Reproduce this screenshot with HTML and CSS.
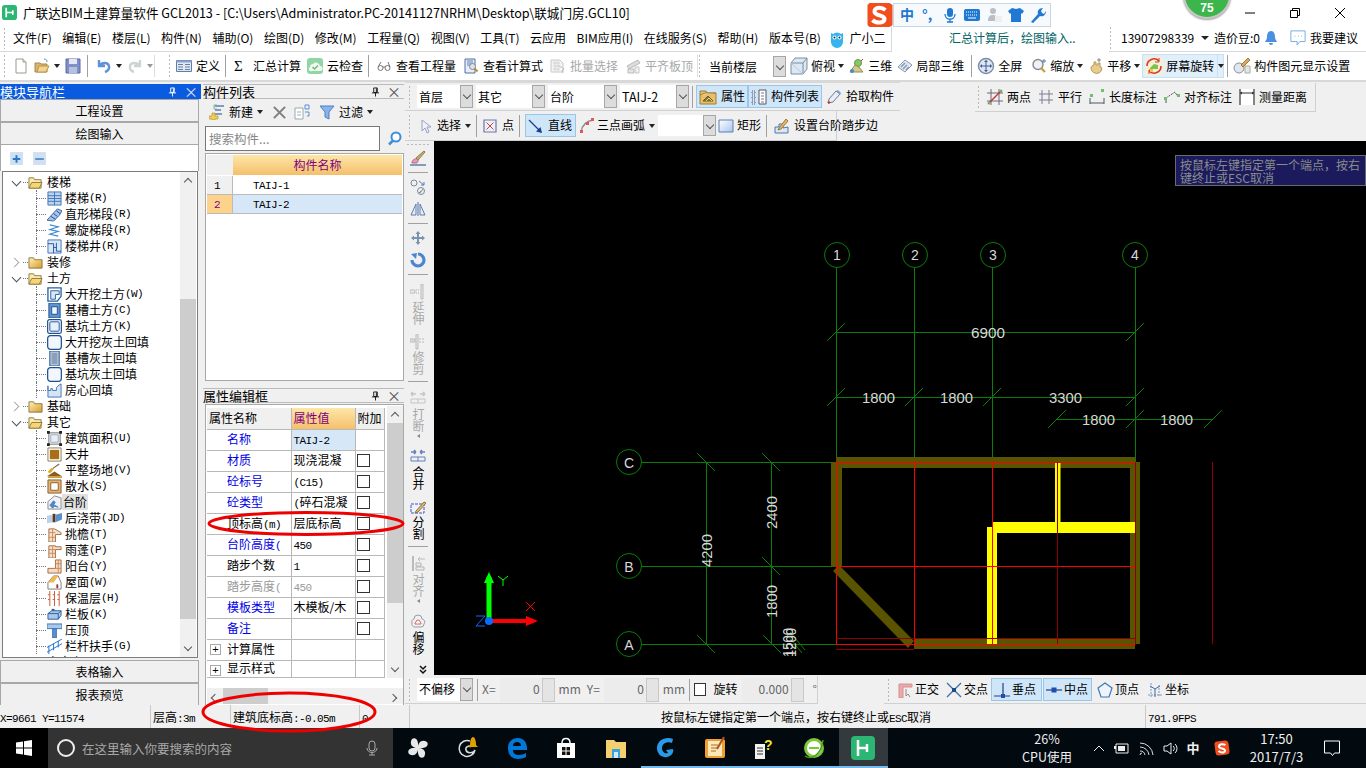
FILE: index.html
```html
<!DOCTYPE html>
<html lang="zh-CN">
<head>
<meta charset="utf-8">
<title>广联达BIM土建算量软件 GCL2013</title>
<link rel="stylesheet" href="styles.css">
</head>
<body>
<svg class="defs" aria-hidden="true">
<defs>
<symbol id="doc" viewBox="0 0 16 16"><path d="M3 1h7l3 3v11H3z" fill="#fff" stroke="#9a9a8a"/><path d="M10 1v3h3" fill="#e8e8d8" stroke="#9a9a8a"/></symbol>
<symbol id="open" viewBox="0 0 16 16"><path d="M1 5h5l1 1h6v8H1z" fill="#d9b36a" stroke="#a8874a"/><path d="M3 14l2-6h10l-3 6z" fill="#f3d58f" stroke="#b8964e"/><path d="M10 1c2 0 3 1 3 3" fill="none" stroke="#6a8ab0"/></symbol>
<symbol id="save" viewBox="0 0 16 16"><path d="M1 1h14v14H1z" fill="#7f8fc8" stroke="#5b6aa8"/><path d="M4 1h8v5H4z" fill="#e4e8f4"/><path d="M4 9h8v6H4z" fill="#b8c0e0"/></symbol>
<symbol id="undo" viewBox="0 0 16 16"><path d="M3 2v6h6M3 8c3-4 9-4 10 0 .6 3-1 5-4 6" fill="none" stroke="#5d92d6" stroke-width="2.4"/></symbol>
<symbol id="redo" viewBox="0 0 16 16"><path d="M13 2v6H7M13 8c-3-4-9-4-10 0-.6 3 1 5 4 6" fill="none" stroke="#ccd4d4" stroke-width="2.4"/></symbol>
<symbol id="def" viewBox="0 0 16 16"><path d="M.5 2.5h15v11H.5z" fill="#dfe8f4" stroke="#5f7fa8"/><path d="M.5 2.5h15v2H.5z" fill="#8aa6cc"/><path d="M2 6.500h5M2 9h5M2 11.500h5M9 6.500h5M9 9h5M9 11.500h5" stroke="#6b7f96"/></symbol>
<symbol id="cloud" viewBox="0 0 16 16"><rect x="0" y="0" width="16" height="16" rx="3" fill="#8fd6a4"/><path d="M3 9a3 3 0 0 1 3-3 4 4 0 0 1 7 2 2.500 2.500 0 0 1 0 5H5a2 2 0 0 1-2-4z" fill="#f2f7ef"/><path d="M5.500 9l2 2 3.500-3.500" fill="none" stroke="#6ab580" stroke-width="1.300"/></symbol>
<symbol id="glass" viewBox="0 0 16 16"><path d="M2 10a2.500 2.500 0 1 0 5 0 2.500 2.500 0 1 0-5 0zM9 10a2.500 2.500 0 1 0 5 0 2.500 2.500 0 1 0-5 0zM7 9h2M2 9l3-5M14 9l-2-5" fill="none" stroke="#777"/></symbol>
<symbol id="calc" viewBox="0 0 16 16"><path d="M2 1h10v14H2z" fill="#e8eef8" stroke="#4e6fa8"/><path d="M4 3h6M4 5h6M4 7h3" stroke="#5d7fb8"/><circle cx="9.500" cy="8.500" r="3" fill="#d8e4f0" stroke="#888"/><path d="M11.500 10.500l3 3" stroke="#c08a30" stroke-width="2"/></symbol>
<symbol id="batch" viewBox="0 0 16 16"><path d="M1 2h9l3 3v9H1z" fill="#f3f3f3" stroke="#c8c8c8"/><path d="M3 5h7M3 8h7M3 11h7M5 3v10M8 3v10" stroke="#d4d4d4"/><path d="M9 8l5 3-2 1 1 3" fill="#fff" stroke="#bcbcbc"/></symbol>
<symbol id="flat" viewBox="0 0 16 16"><path d="M2 8l11-6 2 3-11 6z" fill="#dcdcdc" stroke="#bbb"/><path d="M3 11h6v4H3z" fill="#e4e4e4" stroke="#bbb"/><path d="M10 9h4v6h-4z" fill="#eee" stroke="#c8c8c8"/></symbol>
<symbol id="box3d" viewBox="0 0 18 18"><path d="M1 6l4-5h12v11l-4 5H1z" fill="#dbe7f2" stroke="#7c8ea0"/><path d="M1 6h12v11M13 6l4-5" fill="none" stroke="#7c8ea0"/><path d="M1 6l12 11" stroke="#b9cadb"/></symbol>
<symbol id="tri" viewBox="0 0 16 16"><circle cx="9" cy="5" r="3.500" fill="#88c86a" stroke="#5b9b48"/><path d="M1 14l5-7 4 2 4 5z" fill="#d6c88c" stroke="#8f8f50"/><circle cx="3" cy="13" r="2" fill="#4a8aca"/><path d="M12 3l2-2" stroke="#c33"/></symbol>
<symbol id="local" viewBox="0 0 16 16"><path d="M1 9l7-7 7 5-7 7z" fill="#dfe8f4" stroke="#8a9ab0"/><path d="M4 9l4-4M6 11l4-4M9 12l3-3" stroke="#8a9ab0" stroke-width="1.500"/></symbol>
<symbol id="full" viewBox="0 0 18 18"><circle cx="9" cy="9" r="7.500" fill="#dfe6f2" stroke="#7a8ca6" stroke-width="1.400"/><path d="M9 3.500v11M3.500 9h11" stroke="#3e5f9a"/><path d="M9 3l-2 2h4zM9 15l-2-2h4zM3 9l2-2v4zM15 9l-2-2v4z" fill="#3e5f9a"/></symbol>
<symbol id="zoom" viewBox="0 0 16 16"><circle cx="7" cy="6.500" r="5" fill="#eef2f8" stroke="#8a8a8a" stroke-width="1.400"/><path d="M10 10l4 4" stroke="#c9a23e" stroke-width="2.400"/><path d="M13 1v4M11 3h4" stroke="#4f7fb8"/></symbol>
<symbol id="hand" viewBox="0 0 16 16"><path d="M3 10c0-2 2-3 3-3V4h2v3h2V5h2v4h1c1 1 1 3 0 4-1 2-4 3-6 2-2 0-4-3-4-5z" fill="#e8cc8e" stroke="#b69752"/><path d="M11 0v4M9 2h4" stroke="#888"/></symbol>
<symbol id="rotate" viewBox="0 0 18 18"><rect x="0" y="0" width="18" height="18" fill="#f4f0d8"/><path d="M2 9a7 7 0 0 1 12-5M16 9a7 7 0 0 1-12 5" fill="none" stroke="#e0352a" stroke-width="1.600"/><path d="M14 1v4h-4M4 17v-4h4" fill="none" stroke="#e0352a"/><path d="M5 11l4-4 4 1v4H5z" fill="#7cc24c"/><path d="M5 12h3v3H5z" fill="#f1c740"/></symbol>
<symbol id="disp" viewBox="0 0 18 18"><circle cx="6" cy="11" r="5" fill="#dfe6ef" stroke="#8f8f8f"/><path d="M8 8l7-7 2 2-7 7z" fill="#d8a95e" stroke="#a07a3a"/><path d="M12 9h5v7h-5z" fill="#e8e8d8" stroke="#aaa"/></symbol>
<symbol id="props" viewBox="0 0 18 18"><path d="M1 3h6l1 2h9v11H1z" fill="#e8be6a" stroke="#9c7e36"/><path d="M1 7l5-2h11" fill="#f6e4b0" stroke="#9c7e36"/><path d="M4 13l5-5 5 5z" fill="#8a7a30" stroke="#6a5a20"/><path d="M7 13l3-3 3 3" stroke="#e8d080" fill="none"/></symbol>
<symbol id="list" viewBox="0 0 16 16"><path d="M1 2h3v3H1zM1 7h3v3H1zM1 12h3v3H1z" fill="none" stroke="#556" stroke-dasharray="1 1"/><path d="M8 1h7v14H8z" fill="#fff" stroke="#556"/><path d="M10 4h3M10 7h3M10 10h3M10 13h3" stroke="#778"/></symbol>
<symbol id="pick" viewBox="0 0 16 16"><path d="M2 14l1-4 7-8 4 3-7 8z" fill="#e8eef6" stroke="#6c7b94"/><path d="M10 2l2-1 3 3-1 2z" fill="#7aa2d0"/><path d="M2 14l2-1" stroke="#c33" stroke-width="2"/></symbol>
<symbol id="twop" viewBox="0 0 16 16"><path d="M4 0v16M12 0v16M0 4h16M0 12h16" stroke="#6a6a7a"/><path d="M2 14L14 2" stroke="#c33" stroke-width="1.400"/><circle cx="2" cy="14" r="1.500" fill="#6bb36b"/><circle cx="14" cy="2" r="1.500" fill="#6bb36b"/></symbol>
<symbol id="para" viewBox="0 0 16 16"><path d="M4 1v14M11 1v14M1 5h14M1 11h14" stroke="#7c7c96"/></symbol>
<symbol id="lend" viewBox="0 0 16 16"><path d="M1 9v6M15 9v6M1 14h14" stroke="#556"/><rect x="1" y="5" width="3" height="3" fill="#6bc26b"/><rect x="12" y="0" width="3" height="3" fill="#6bc26b"/></symbol>
<symbol id="align" viewBox="0 0 16 16"><path d="M2 9l9-6 3 5" fill="none" stroke="#556" stroke-dasharray="2 1"/><path d="M2 14v-4" stroke="#556"/><rect x="0" y="8" width="3" height="3" fill="#6bc26b"/><rect x="13" y="5" width="3" height="3" fill="#6bc26b"/></symbol>
<symbol id="measure" viewBox="0 0 16 16"><rect x="0" y="0" width="16" height="16" fill="#fff"/><path d="M1 0v16M15 0v16M1 4h14" stroke="#333" stroke-width="1.200"/><path d="M1 4l2-1.500v3zM15 4l-2-1.500v3z" fill="#333"/></symbol>
<symbol id="select" viewBox="0 0 16 16"><path d="M5 2v11l3-3 2 5 2-1-2-5h4z" fill="#eef0fa" stroke="#99a3c0"/></symbol>
<symbol id="point" viewBox="0 0 16 16"><path d="M2 2h12v12H2z" fill="#eef0f8" stroke="#6a78a8" stroke-width="1.200"/><path d="M4.500 4.500l7 7M11.500 4.500l-7 7" stroke="#c44"/></symbol>
<symbol id="line" viewBox="0 0 16 16"><path d="M1 2l12 12" stroke="#14408f" stroke-width="1.300"/><path d="M14 15l-6-1.500 4.500-4.500z" fill="#14408f"/></symbol>
<symbol id="arc" viewBox="0 0 16 16"><path d="M2 14C3 7 8 3 14 2" fill="none" stroke="#8a8a8a" stroke-width="1.300"/><rect x="1" y="12" width="3" height="3" fill="#e0565a"/><rect x="7" y="4" width="3" height="3" fill="#e0565a"/><rect x="12" y="0" width="3" height="3" fill="#e0565a"/></symbol>
<symbol id="rect" viewBox="0 0 16 16"><defs><linearGradient id="rg" x1="0" y1="0" x2="1" y2="1"><stop offset="0" stop-color="#fff"/><stop offset="1" stop-color="#a8c4ee"/></linearGradient></defs><path d="M1 2h14v12H1z" fill="url(#rg)" stroke="#5c7fb8"/></symbol>
<symbol id="setstep" viewBox="0 0 16 16"><path d="M1 15V9h4V6h4v4l5-1v6z" fill="#dbe6f4" stroke="#4f76a8"/><path d="M5 10l7-9 2 2-7 8-3 1z" fill="#e6b666" stroke="#9a7a34"/></symbol>
<symbol id="brush" viewBox="0 0 16 16"><path d="M6 8l8-7 1 1-7 8z" fill="#c8b070" stroke="#8e7a40"/><path d="M2 13c0-3 3-5 5-4 2 1 1 3 0 4z" fill="#e89ab8" stroke="#b06a88"/><path d="M0 15h16" stroke="#4a6fa0" stroke-width="1.300"/></symbol>
<symbol id="copy2" viewBox="0 0 16 16"><circle cx="4" cy="4" r="3" fill="none" stroke="#7a8a9a"/><circle cx="11" cy="12" r="3.500" fill="none" stroke="#7a8a9a"/><path d="M11 12l-2 2M13 10l-3 4" stroke="#7a8a9a"/><path d="M9 2l5 4M14 3v3h-3" fill="none" stroke="#4f7fb8"/></symbol>
<symbol id="mirror" viewBox="0 0 16 16"><path d="M8 1v14" stroke="#4f6fa8"/><path d="M6 3v11H1zM10 3v11h5z" fill="#e4ecf6" stroke="#5f7fb0"/></symbol>
<symbol id="move" viewBox="0 0 16 16"><path d="M8 1l2.500 3H9v3h3V5.500L15 8l-3 2.500V9H9v3h1.500L8 15l-2.500-3H7V9H4v1.500L1 8l3-2.500V7h3V4H5.500z" fill="#7b94ae"/></symbol>
<symbol id="rot" viewBox="0 0 16 16"><path d="M8 2a6 6 0 1 1-6 6" fill="none" stroke="#4a86d0" stroke-width="3.200"/><path d="M1 2l6-1-1 6z" fill="#4a86d0"/></symbol>
<symbol id="ext" viewBox="0 0 16 16"><path d="M11 0h2v15h-2z" fill="#e8e8e8" stroke="#bbb"/><path d="M0 6h5v3H0z" fill="#eee" stroke="#bbb"/><path d="M6 6h3M6 9h3" stroke="#aaa" stroke-dasharray="1 1"/></symbol>
<symbol id="trim" viewBox="0 0 16 16"><path d="M6 0h2v15H6z" fill="#e8e8e8" stroke="#bbb"/><path d="M0 5h5v3H0z" fill="#ddd" stroke="#bbb"/><path d="M9 5h6M9 8h6" stroke="#bbb" stroke-dasharray="2 1"/></symbol>
<symbol id="brk" viewBox="0 0 16 16"><path d="M1 3h5M1 3l2-2M1 3l2 2M15 3h-5M15 3l-2-2M15 3l-2 2" stroke="#c4c4c4" stroke-width="1.500" fill="none"/><path d="M1 8h14v4H1z" fill="none" stroke="#c4c4c4"/><path d="M8 8v4" stroke="#c4c4c4"/></symbol>
<symbol id="merge" viewBox="0 0 16 16"><path d="M1 3h5M6 3L4 1M6 3L4 5M15 3h-5M10 3l2-2M10 3l2 2" stroke="#6080c0" stroke-width="1.500" fill="none"/><path d="M1 8h14v4H1z" fill="none" stroke="#6080c0"/><path d="M8 8v4" stroke="#6080c0"/></symbol>
<symbol id="split" viewBox="0 0 16 16"><path d="M1 5h13v9H1z" fill="#eef2fb" stroke="#3a55c8" stroke-dasharray="3 1"/><path d="M6 12l8-9 2 1-8 9-3 1z" fill="#e6be72" stroke="#8c7236"/></symbol>
<symbol id="aligny" viewBox="0 0 16 16"><path d="M2 0h2v15H2z" fill="#bbb"/><path d="M6 11h8v3H6zM6 7h5v3H6z" fill="#eee" stroke="#b4b4b4"/><path d="M8 3h7M8 3l2-2M8 3l2 2" stroke="#bbb" fill="none"/></symbol>
<symbol id="offset" viewBox="0 0 16 16"><path d="M2 9a3 3 0 0 1 2-4 4 4 0 0 1 8 0 3 3 0 0 1 2 5 3 3 0 0 1-3 3H5a3 3 0 0 1-3-4z" fill="none" stroke="#8f9fb0"/><path d="M5 10a2 2 0 0 1 1-2 2 2 0 0 1 4 0 2 2 0 0 1 1 2z" fill="#fff" stroke="#e06060"/></symbol>
<symbol id="orth" viewBox="0 0 16 16"><path d="M2 2h13v3H6v11H2z" fill="#e8aaaa" stroke="#d89090"/><path d="M9 7v7l2-2 2 3" fill="none" stroke="#8c8c8c"/></symbol>
<symbol id="cross" viewBox="0 0 16 16"><path d="M1 1l14 14M15 1L1 15" stroke="#3b6fa8" stroke-width="1.300"/><rect x="6" y="6" width="4" height="4" fill="#1c4a8a"/></symbol>
<symbol id="perp" viewBox="0 0 16 16"><path d="M9 1v13M0 14h16" stroke="#223f86" stroke-width="1.200"/><rect x="7" y="12" width="4" height="4" fill="#1f4db0"/></symbol>
<symbol id="mid" viewBox="0 0 16 16"><path d="M0 8h16" stroke="#223f86" stroke-width="1.200"/><rect x="5.500" y="5.500" width="5" height="5" fill="#1f4db0"/></symbol>
<symbol id="vert" viewBox="0 0 16 16"><path d="M8 1l7 5-3 9H4L1 6z" fill="#eef4fb" stroke="#3d78b8" stroke-width="1.200"/></symbol>
<symbol id="coord" viewBox="0 0 16 16"><path d="M4 1v14M12 3v11M1 13h14" stroke="#7a98c0" stroke-dasharray="2 1"/><path d="M8 15V7M8 7l5-3M8 7L3 4" stroke="#3d6fb0" fill="none"/></symbol>
<symbol id="newp" viewBox="0 0 16 16"><path d="M6 2h9M6 6h6M6 10h7" stroke="#5b7fb0" stroke-width="1.300"/><path d="M8 1H5v4h3" fill="none" stroke="#8aa"/><path d="M3 9h3v3h3v3H6v1H3v-1H0v-3h3z" fill="#f0cd58" stroke="#b89a30" stroke-width=".700"/></symbol>
<symbol id="del" viewBox="0 0 16 16"><path d="M2 2l12 12M14 2L2 14" stroke="#808080" stroke-width="2.200"/></symbol>
<symbol id="copyp" viewBox="0 0 16 16"><path d="M1 4h8v11H1z" fill="#fff" stroke="#9aa"/><path d="M3 8h4M3 11h4" stroke="#aab"/><path d="M11 1h4v4h-4zM11 8h4M15 8v4h-2" fill="none" stroke="#5b8fd0"/></symbol>
<symbol id="filter" viewBox="0 0 16 16"><path d="M1 2h14l-5 6v7l-4-2V8z" fill="#8cb4ea" stroke="#4d80c8"/></symbol>
<symbol id="folderO" viewBox="0 0 16 16"><path d="M1 3h5l1 2h7v9H1z" fill="#fbe9b0" stroke="#8f7b3e"/><path d="M1 14l3-6h11l-3 6z" fill="#f5d574" stroke="#8f7b3e"/></symbol>
<symbol id="folderC" viewBox="0 0 16 16"><defs><linearGradient id="fc" x1="0" y1="0" x2="1" y2="1"><stop offset="0" stop-color="#fff2b8"/><stop offset="1" stop-color="#d89a28"/></linearGradient></defs><path d="M1 3h5l1 2h8v9H1z" fill="url(#fc)" stroke="#8a7a48"/></symbol>
<symbol id="tStair" viewBox="0 0 16 16"><path d="M1 1h14v14H1z" fill="#bcd4f0" stroke="#3f73b8"/><path d="M1 5h14M1 8h14M1 11h14M8 1v14" stroke="#3f73b8"/></symbol>
<symbol id="tFlight" viewBox="0 0 16 16"><path d="M0 14l11-12 5 2-3 5-6 6z" fill="#a8c4ea" stroke="#3565a8"/><path d="M4 10l5 3M7 7l4 3M10 4l4 3" stroke="#1d4d90"/></symbol>
<symbol id="tSpiral" viewBox="0 0 16 16"><path d="M3 2l9 2-9 3 9 2-9 3 9 2" fill="none" stroke="#3f86d0" stroke-width="1.200"/></symbol>
<symbol id="tWell" viewBox="0 0 16 16"><path d="M1 1h14v14H1z" fill="#d8e6f6" stroke="#3f73b8"/><path d="M1 5h6v10M10 4v9h5M7 9h3" stroke="#1d55a0" fill="none"/></symbol>
<symbol id="tDig" viewBox="0 0 16 16"><path d="M1 1h14v9l-4 5H1z" fill="#fff" stroke="#285f9f" stroke-width="1.400"/><path d="M4 13V4h9v4h-4v5z" fill="#d8e8f8" stroke="#285f9f"/></symbol>
<symbol id="tSlot" viewBox="0 0 16 16"><path d="M2 0h12v16H2z" fill="#5e94cc" stroke="#1f4f90"/><path d="M5 4h6v8H5z" fill="#eef6ff" stroke="#1f4f90"/></symbol>
<symbol id="tPit" viewBox="0 0 16 16"><rect x=".700" y=".700" width="14.600" height="14.600" rx="2" fill="#fff" stroke="#1f4f90" stroke-width="1.300"/><rect x="3" y="3" width="10" height="10" rx="1" fill="#e6f0fc" stroke="#1f4f90"/></symbol>
<symbol id="tFill" viewBox="0 0 16 16"><rect x=".700" y=".700" width="14.600" height="14.600" rx="3" fill="#f2f6fd" stroke="#1f4f90" stroke-width="1.300"/></symbol>
<symbol id="tSlotF" viewBox="0 0 16 16"><path d="M3 0h10v16H3z" fill="#b8c8dc" stroke="#1f4f90"/><path d="M5 2h6v12H5z" fill="#8ca0b8"/></symbol>
<symbol id="tRoom" viewBox="0 0 16 16"><path d="M1 3v12h14V1l-2 1-3 3v3H6V6H4v2H1z" fill="#d6e4f4" stroke="#3f73b8"/></symbol>
<symbol id="tArea" viewBox="0 0 16 16"><path d="M2 2h12v12H2z" fill="#fff" stroke="#667"/><path d="M4 4h8v8H4z" fill="#e8eff8" stroke="#9aa"/><path d="M0 0h3v3H0zM13 0h3v3h-3zM0 13h3v3H0zM13 13h3v3h-3z" fill="#222"/></symbol>
<symbol id="tSky" viewBox="0 0 16 16"><path d="M1 1h14v14H1z" fill="#fff" stroke="#8a7a48"/><rect x="3" y="3" width="10" height="10" fill="#a86e18"/></symbol>
<symbol id="tSite" viewBox="0 0 16 16"><path d="M0 14l8-5 8 5z" fill="#8a5c20"/><path d="M1 15h15" stroke="#c8a040" stroke-width="2"/><path d="M1 9l4-4 2 2-3 3c-1 1-2 1-3-1z" fill="#e0a820"/><path d="M6 6l7-5" stroke="#7a6a40" stroke-width="1.300"/></symbol>
<symbol id="tDrain" viewBox="0 0 16 16"><path d="M1 1h14v14H1z" fill="#e2b47a" stroke="#8a5e2a"/><path d="M4 4h8v8H4z" fill="#fff" stroke="#8a5e2a"/></symbol>
<symbol id="tStep" viewBox="0 0 16 16"><path d="M1 15V7l7-6 7 2v12z" fill="#eef2f8" stroke="#888"/><path d="M3 11l4-5 2 2-2 2 5 3-4-1-2 2z" fill="#4f8ac8" stroke="#2c5f9a" stroke-width=".600"/></symbol>
<symbol id="tPour" viewBox="0 0 16 16"><path d="M0 5l6-1v8l-6 1z" fill="#bcd0e8"/><path d="M6 3h3v9H6z" fill="#5a3a18"/><path d="M9 4l7-2v7l-7 3z" fill="#5c8fcc"/></symbol>
<symbol id="tEave" viewBox="0 0 16 16"><path d="M2 16V2h6l7 4v2H9v8z" fill="#f4e2d0" stroke="#a86a3a"/><path d="M2 6h7M2 11h7M6 2v14" stroke="#c88a5a"/></symbol>
<symbol id="tCan" viewBox="0 0 16 16"><path d="M2 16V3h7v1h6v3H9v9z" fill="#f4e2d0" stroke="#a86a3a"/><path d="M2 7h7M2 11h7M6 3v13" stroke="#c88a5a"/></symbol>
<symbol id="tBalc" viewBox="0 0 16 16"><path d="M9 1h6v14H1v-5h8z" fill="#f4dcc8" stroke="#a86a3a"/><path d="M9 5h6M9 10h6M12 1v14" stroke="#c88a5a"/></symbol>
<symbol id="tRoof" viewBox="0 0 16 16"><path d="M1 8l6-7h5l3 7v7H1z" fill="#fff" stroke="#777"/><path d="M1 8l6-7h5l-5 7z" fill="#f0b850"/><rect x="10" y="10" width="2" height="4" fill="#a03030"/></symbol>
<symbol id="tInsul" viewBox="0 0 16 16"><path d="M3 0v16M8 0v16M13 0v16" stroke="#c85a30"/><path d="M1 4h14M1 9h14" stroke="#c85a30" stroke-dasharray="2 3"/></symbol>
<symbol id="tPanel" viewBox="0 0 16 16"><path d="M1 7l4-3h10v5l-3 4H1z" fill="#a8c8ec" stroke="#2c5f9a"/><path d="M1 7h11v6M12 7l3-3" fill="none" stroke="#2c5f9a"/><path d="M5 2h3v2H5z" fill="#2c5f9a"/></symbol>
<symbol id="tCope" viewBox="0 0 16 16"><path d="M0 1h16v5H0z" fill="#a8c8ec" stroke="#3f73b8"/><path d="M6 6h4v10H6z" fill="#5c8fcc" stroke="#3f73b8"/></symbol>
<symbol id="tRail" viewBox="0 0 16 16"><path d="M0 14l16-9M0 9l16-9M2 7v9M7 5v7M12 2v7" stroke="#1f6fd0" fill="none"/></symbol>
<symbol id="pin" viewBox="0 0 10 10"><path d="M3 .5h4v5H3zM1 6h8M5 6v4M6 1v4.500" fill="none" stroke="currentColor"/></symbol>
<symbol id="pgMic" viewBox="0 0 16 16"><rect x="5" y="1" width="6" height="9" rx="3" fill="#1f78d1"/><path d="M3 7c0 7 10 7 10 0M8 12v3M5 15h6" fill="none" stroke="#1f78d1" stroke-width="1.300"/></symbol>
</defs>
</svg>

<div class="app">
  <header class="titlebar">
    <svg class="logo" viewBox="0 0 16 16"><rect width="16" height="16" rx="3" fill="#2bb673"/><path d="M4.500 3v10M4.500 8h7M11.500 5.500v5" stroke="#fff" stroke-width="1.800"/></svg>
    <span class="title-text">广联达BIM土建算量软件 GCL2013 - [C:\Users\Administrator.PC-20141127NRHM\Desktop\联城门房.GCL10]</span>
    <div class="winctl">
      <svg class="wc" viewBox="0 0 12 12"><path d="M1 6h10" stroke="#000"/></svg>
      <svg class="wc" viewBox="0 0 12 12"><path d="M3.500 3.500v-2h7v7h-2M1.500 3.500h7v7h-7z" fill="none" stroke="#000"/></svg>
      <svg class="wc" viewBox="0 0 12 12"><path d="M1 1l10 10M11 1L1 11" stroke="#000"/></svg>
    </div>
  </header>

  <nav class="menubar">
    <div class="menu-left">
      <span class="grip"></span>
      <span class="mi first">文件(F)</span><span class="mi">编辑(E)</span><span class="mi">楼层(L)</span><span class="mi">构件(N)</span><span class="mi">辅助(O)</span><span class="mi">绘图(D)</span><span class="mi">修改(M)</span><span class="mi">工程量(Q)</span><span class="mi">视图(V)</span><span class="mi">工具(T)</span><span class="mi">云应用</span><span class="mi">BIM应用(I)</span><span class="mi">在线服务(S)</span><span class="mi">帮助(H)</span><span class="mi">版本号(B)</span>
      <svg class="robot" viewBox="0 0 16 16"><path d="M2 3l2 1a6 6 0 0 1 8 0l2-1v9a6 6 0 0 1-12 0z" fill="#35b4ee"/><circle cx="5.500" cy="7.500" r="2" fill="#fff"/><circle cx="10.500" cy="7.500" r="2" fill="#fff"/><circle cx="5.500" cy="7.500" r="1" fill="#134"/><circle cx="10.500" cy="7.500" r="1" fill="#134"/></svg>
      <span class="mi-last">广小二</span>
    </div>
    <span class="notice">汇总计算后，绘图输入..</span>
    <div class="menu-right">
      <span class="grip"></span>
      <span class="account">13907298339</span><span class="caret"></span>
      <span class="beans">造价豆:0</span>
      <svg class="i16 bell" viewBox="0 0 16 16"><path d="M8 1c3 0 4 3 4 6 0 3 2 4 2 5H2c0-1 2-2 2-5 0-3 1-6 4-6zM6 13h4a2 2 0 0 1-4 0z" fill="#4a8fe0"/></svg>
      <svg class="i16 chat" viewBox="0 0 18 18"><path d="M1 1h16v12h-6l-3 4v-4H1z" fill="#fff" stroke="#6aa6e0"/><path d="M5 7h1M9 7h1M12.500 7h1" stroke="#6aa6e0"/></svg>
      <span>我要建议</span>
    </div>
  </nav>

  <div class="toolbar">
    <span class="grip tall"></span>
    <svg class="i16 t-new"><use href="#doc"/></svg>
    <svg class="i16 t-open"><use href="#open"/></svg><span class="caret c-s ca"></span>
    <svg class="i16 t-save"><use href="#save"/></svg>
    <span class="sep t-sep1"></span>
    <svg class="i16"><use href="#undo"/></svg><span class="caret c-s ca"></span>
    <svg class="i16 t-redo"><use href="#redo"/></svg><span class="caret c-s ca dim"></span>
    <span class="sep t-sep2"></span>
    <span class="grip tall t-grip2"></span>
    <span class="tool t-def"><svg class="i16"><use href="#def"/></svg>定义</span>
    <span class="sep"></span>
    <span class="tool t-sum"><span class="sigma">Σ</span>汇总计算</span>
    <span class="tool t-cloud"><svg class="i16"><use href="#cloud"/></svg>云检查</span>
    <span class="sep"></span>
    <span class="tool"><svg class="i16"><use href="#glass"/></svg>查看工程量</span>
    <span class="tool"><svg class="i16"><use href="#calc"/></svg>查看计算式</span>
    <span class="tool off"><svg class="i16"><use href="#batch"/></svg>批量选择</span>
    <span class="tool off"><svg class="i16"><use href="#flat"/></svg>平齐板顶</span>
    <span class="sep sep-grip"></span>
    <span class="grip tall"></span>
    <span class="combo c-floor"><span class="combo-text">当前楼层</span><span class="combo-btn"></span></span>
    <span class="tool rg t-view"><svg class="i18"><use href="#box3d"/></svg>俯视<span class="caret c-s"></span></span>
    <span class="tool rg"><svg class="i16"><use href="#tri"/></svg>三维</span>
    <span class="tool rg"><svg class="i16"><use href="#local"/></svg>局部三维</span>
    <span class="sep sep-r"></span>
    <span class="tool rg"><svg class="i18"><use href="#full"/></svg>全屏</span>
    <span class="tool rg t-zoom"><svg class="i16"><use href="#zoom"/></svg>缩放<span class="caret c-s"></span></span>
    <span class="tool rg"><svg class="i16"><use href="#hand"/></svg>平移<span class="caret c-s"></span></span>
    <span class="tool hot rg t-rot"><svg class="i18"><use href="#rotate"/></svg>屏幕旋转<span class="split-caret"><span class="caret c-s"></span></span></span>
    <span class="sep sep-t"></span>
    <span class="tool rg"><svg class="i18"><use href="#disp"/></svg>构件图元显示设置</span>
  </div>

  <main class="main">
    <section class="nav">
      <div class="pane-title blue"><span>模块导航栏</span><svg class="pin"><use href="#pin"/></svg><span class="x">×</span></div>
      <button class="section">工程设置</button>
      <button class="section">绘图输入</button>
      <div class="tree-tools">
        <span class="pm"><svg viewBox="0 0 14 14" class="i14"><path d="M1 1h12v12H1z" fill="#cfe0f2"/><path d="M7 4v7M3.500 7.500h7" stroke="#2a78c8" stroke-width="1.800"/></svg></span>
        <span class="pm"><svg viewBox="0 0 14 14" class="i14"><path d="M1 1h12v12H1z" fill="#cfe0f2"/><path d="M3 7.500h8" stroke="#5a8fc8" stroke-width="1.800"/></svg></span>
      </div>
      <div class="tree">
        <ul class="tree-list">
          <li class="tn open"><svg class="i14"><use href="#folderO"/></svg>楼梯</li>
          <li class="tc"><svg class="i14"><use href="#tStair"/></svg>楼梯<span class="k">(R)</span></li>
          <li class="tc"><svg class="i14"><use href="#tFlight"/></svg>直形梯段<span class="k">(R)</span></li>
          <li class="tc"><svg class="i14"><use href="#tSpiral"/></svg>螺旋梯段<span class="k">(R)</span></li>
          <li class="tc"><svg class="i14"><use href="#tWell"/></svg>楼梯井<span class="k">(R)</span></li>
          <li class="tn shut"><svg class="i14"><use href="#folderC"/></svg>装修</li>
          <li class="tn open"><svg class="i14"><use href="#folderO"/></svg>土方</li>
          <li class="tc"><svg class="i14"><use href="#tDig"/></svg>大开挖土方<span class="k">(W)</span></li>
          <li class="tc"><svg class="i14"><use href="#tSlot"/></svg>基槽土方<span class="k">(C)</span></li>
          <li class="tc"><svg class="i14"><use href="#tPit"/></svg>基坑土方<span class="k">(K)</span></li>
          <li class="tc"><svg class="i14"><use href="#tFill"/></svg>大开挖灰土回填</li>
          <li class="tc"><svg class="i14"><use href="#tSlotF"/></svg>基槽灰土回填</li>
          <li class="tc"><svg class="i14"><use href="#tFill"/></svg>基坑灰土回填</li>
          <li class="tc"><svg class="i14"><use href="#tRoom"/></svg>房心回填</li>
          <li class="tn shut"><svg class="i14"><use href="#folderC"/></svg>基础</li>
          <li class="tn open"><svg class="i14"><use href="#folderO"/></svg>其它</li>
          <li class="tc"><svg class="i14"><use href="#tArea"/></svg>建筑面积<span class="k">(U)</span></li>
          <li class="tc"><svg class="i14"><use href="#tSky"/></svg>天井</li>
          <li class="tc"><svg class="i14"><use href="#tSite"/></svg>平整场地<span class="k">(V)</span></li>
          <li class="tc"><svg class="i14"><use href="#tDrain"/></svg>散水<span class="k">(S)</span></li>
          <li class="tc sel"><svg class="i14"><use href="#tStep"/></svg><span>台阶</span></li>
          <li class="tc"><svg class="i14"><use href="#tPour"/></svg>后浇带<span class="k">(JD)</span></li>
          <li class="tc"><svg class="i14"><use href="#tEave"/></svg>挑檐<span class="k">(T)</span></li>
          <li class="tc"><svg class="i14"><use href="#tCan"/></svg>雨蓬<span class="k">(P)</span></li>
          <li class="tc"><svg class="i14"><use href="#tBalc"/></svg>阳台<span class="k">(Y)</span></li>
          <li class="tc"><svg class="i14"><use href="#tRoof"/></svg>屋面<span class="k">(W)</span></li>
          <li class="tc"><svg class="i14"><use href="#tInsul"/></svg>保温层<span class="k">(H)</span></li>
          <li class="tc"><svg class="i14"><use href="#tPanel"/></svg>栏板<span class="k">(K)</span></li>
          <li class="tc"><svg class="i14"><use href="#tCope"/></svg>压顶</li>
          <li class="tc"><svg class="i14"><use href="#tRail"/></svg>栏杆扶手<span class="k">(G)</span></li>
          <li class="tn shut"><svg class="i14"><use href="#folderC"/></svg>自定义</li>
        </ul>
        <div class="vscroll tree-scroll">
          <span class="sb-arrow up"></span>
          <span class="sb-thumb"></span>
          <span class="sb-arrow down"></span>
        </div>
      </div>
      <button class="section sec-bottom">表格输入</button>
      <button class="section">报表预览</button>
    </section>

    <section class="parts">
      <div class="pane-title"><span>构件列表</span><svg class="pin"><use href="#pin"/></svg><span class="x">×</span></div>
      <div class="parts-tools">
        <span class="tool p-new"><svg class="i16"><use href="#newp"/></svg>新建<span class="caret c-s"></span></span>
        <svg class="i14 p-del"><use href="#del"/></svg>
        <svg class="i16 p-copy"><use href="#copyp"/></svg>
        <span class="tool p-filter"><svg class="i16"><use href="#filter"/></svg>过滤<span class="caret c-s"></span></span>
      </div>
      <div class="search"><span class="search-box">搜索构件...</span><svg class="i16 search-ic" viewBox="0 0 16 16"><circle cx="9" cy="6" r="4.500" fill="#fff" stroke="#3d8fd8" stroke-width="2"/><path d="M6 9.500l-4 4" stroke="#3d8fd8" stroke-width="2.500"/></svg></div>
      <div class="part-grid">
        <div class="pg-head"><span class="pg-corner"></span><span class="pg-name">构件名称</span></div>
        <div class="pg-row"><span class="pg-no">1</span><span class="pg-val">TAIJ-1</span></div>
        <div class="pg-row sel"><span class="pg-no">2</span><span class="pg-val">TAIJ-2</span></div>
      </div>
      <div class="pane-title prop-title"><span>属性编辑框</span><svg class="pin"><use href="#pin"/></svg><span class="x">×</span></div>
      <div class="prop-wrap">
        <div class="prop-body">
          <table class="prop">
            <tr class="ph"><th>属性名称</th><th class="hot-col">属性值</th><th>附加</th></tr>
            <tr><td class="n b">名称</td><td class="v sel"><span class="k">TAIJ-2</span></td><td></td></tr>
            <tr><td class="n b">材质</td><td class="v">现浇混凝</td><td><i class="cb"></i></td></tr>
            <tr><td class="n b">砼标号</td><td class="v"><span class="k">(C15)</span></td><td><i class="cb"></i></td></tr>
            <tr><td class="n b">砼类型</td><td class="v"><span class="k">(</span>碎石混凝</td><td><i class="cb"></i></td></tr>
            <tr><td class="n">顶标高<span class="k">(m)</span></td><td class="v">层底标高</td><td><i class="cb"></i></td></tr>
            <tr><td class="n b">台阶高度<span class="k">(</span></td><td class="v"><span class="k">450</span></td><td><i class="cb"></i></td></tr>
            <tr><td class="n">踏步个数</td><td class="v"><span class="k">1</span></td><td><i class="cb"></i></td></tr>
            <tr><td class="n g">踏步高度<span class="k">(</span></td><td class="v g"><span class="k">450</span></td><td><i class="cb"></i></td></tr>
            <tr><td class="n b">模板类型</td><td class="v">木模板/木</td><td><i class="cb"></i></td></tr>
            <tr><td class="n b">备注</td><td class="v"></td><td><i class="cb"></i></td></tr>
            <tr><td class="n"><b class="plus">+</b>计算属性</td><td></td><td></td></tr>
            <tr class="last"><td class="n"><b class="plus">+</b>显示样式</td><td></td><td></td></tr>
          </table>
          <div class="vscroll prop-scroll"><span class="sb-arrow up"></span><span class="sb-thumb"></span><span class="sb-arrow down"></span></div>
        </div>
        <div class="hscroll"><span class="sb-arrow left"></span><span class="sb-thumb"></span><span class="sb-arrow right"></span></div>
      </div>
    </section>

    <section class="work">
      <div class="work-top">
        <div class="work-rows">
          <div class="rowbar r1">
            <span class="grip tall"></span>
            <span class="combo c-1"><span class="combo-text">首层</span><span class="combo-btn"></span></span>
            <span class="combo c-2"><span class="combo-text">其它</span><span class="combo-btn"></span></span>
            <span class="combo c-2"><span class="combo-text">台阶</span><span class="combo-btn"></span></span>
            <span class="combo c-2"><span class="combo-text lat">TAIJ-2</span><span class="combo-btn"></span></span>
            <span class="sep"></span>
            <span class="tool hot h-prop"><svg class="i18"><use href="#props"/></svg>属性</span>
            <span class="tool hot h-list"><svg class="i16"><use href="#list"/></svg>构件列表</span>
            <span class="tool t-pick"><svg class="i16"><use href="#pick"/></svg>拾取构件</span>
          </div>
          <div class="rowbar r2">
            <span class="grip tall"></span>
            <span class="tool t-sel"><svg class="i16"><use href="#select"/></svg>选择<span class="caret c-s"></span></span>
            <span class="sep"></span>
            <span class="tool t-pt"><svg class="i16"><use href="#point"/></svg>点</span>
            <span class="sep"></span>
            <span class="tool hot h-line"><svg class="i16"><use href="#line"/></svg>直线</span>
            <span class="tool t-arc"><svg class="i16"><use href="#arc"/></svg>三点画弧<span class="caret c-s"></span></span>
            <span class="combo c-blank"><span class="combo-text"></span><span class="combo-btn"></span></span>
            <span class="tool t-rect"><svg class="i16"><use href="#rect"/></svg>矩形</span>
            <span class="sep"></span>
            <span class="tool"><svg class="i16"><use href="#setstep"/></svg>设置台阶踏步边</span>
          </div>
        </div>
        <div class="rowbar measure">
          <span class="grip tall"></span>
          <span class="tool"><svg class="i16"><use href="#twop"/></svg>两点</span>
          <span class="tool"><svg class="i16"><use href="#para"/></svg>平行</span>
          <span class="tool"><svg class="i16"><use href="#lend"/></svg>长度标注</span>
          <span class="tool"><svg class="i16"><use href="#align"/></svg>对齐标注</span>
          <span class="tool"><svg class="i16"><use href="#measure"/></svg>测量距离</span>
        </div>
      </div>

      <div class="work-mid">
        <div class="vbar">
          <span class="vgrip"></span>
          <svg class="i16 v-first"><use href="#brush"/></svg>
          <span class="hsep"></span>
          <svg class="i16"><use href="#copy2"/></svg>
          <svg class="i16"><use href="#mirror"/></svg>
          <span class="hsep"></span>
          <svg class="i16"><use href="#move"/></svg>
          <svg class="i16"><use href="#rot"/></svg>
          <span class="hsep"></span>
          <span class="vt off"><svg class="i16"><use href="#ext"/></svg><span class="vtxt">延伸</span></span>
          <span class="vt off"><svg class="i16"><use href="#trim"/></svg><span class="vtxt">修剪</span></span>
          <span class="hsep"></span>
          <span class="vt off"><svg class="i16"><use href="#brk"/></svg><span class="vtxt">打断</span><em class="tiny"></em></span>
          <span class="vt"><svg class="i16"><use href="#merge"/></svg><span class="vtxt">合并</span></span>
          <span class="vt"><svg class="i16"><use href="#split"/></svg><span class="vtxt">分割</span></span>
          <span class="hsep"></span>
          <span class="vt off"><svg class="i16"><use href="#aligny"/></svg><span class="vtxt">对齐</span><em class="tiny"></em></span>
          <span class="vt"><svg class="i16"><use href="#offset"/></svg><span class="vtxt">偏移</span></span>
          <svg class="chev" viewBox="0 0 8 8"><path d="M1 0l3 3 3-3M1 4l3 3 3-3" fill="none" stroke="#111" stroke-width="1.500"/></svg>
        </div>
        <div class="canvas">
          <svg class="cad" viewBox="434 141 932 534" width="932" height="534">
            <g stroke="#0a7d0a" fill="none" stroke-width="1">
              <path d="M836.500 267v195M914.500 267v195M992.500 267v195M1135.500 267v195"/>
              <path d="M642 462.500h194M642 566.500h194M642 644.500h194"/>
              <path d="M706.500 462v182M771.500 462v182"/>
              <path d="M836 332.500h299M836 397.500h299M1057 419.500h156"/>
              <path d="M827 341l18-18M1126 341l18-18M827 406l18-18M905 406l18-18M983 406l18-18M1126 406l18-18M1048 428l18-18M1126 428l18-18M1204 428l18-18"/>
              <path d="M697 453l18 18M762 453l18 18M762 557l18 18M697 635l18 18M763 635l18 18M787 635l15 18M790 632l15 18"/>
              <circle cx="837" cy="255" r="12.500"/><circle cx="915" cy="255" r="12.500"/><circle cx="993" cy="255" r="12.500"/><circle cx="1135" cy="255" r="12.500"/>
              <circle cx="629" cy="462" r="12.500"/><circle cx="629" cy="566" r="12.500"/><circle cx="629" cy="644" r="12.500"/>
            </g>
            <g fill="#5a5300">
              <rect x="836" y="457" width="299" height="11"/>
              <rect x="831" y="462" width="11" height="105"/>
              <rect x="1130" y="462" width="10" height="182"/>
              <rect x="914" y="638" width="221" height="11"/>
              <path d="M833 571l6-6 75 76-6 7z"/>
            </g>
            <g fill="#ffff00">
              <rect x="992" y="522" width="143" height="11"/>
              <rect x="987" y="527" width="10" height="117"/>
              <rect x="1055" y="463" width="5.500" height="60"/>
            </g>
            <g stroke="#ff0000" fill="none">
              <path d="M836.500 462.500h299M836.500 462.500v182h299M914.500 462v182M992.500 462v182M836 566.500h299"/>
            </g>
            <g stroke="#900000" fill="none">
              <path d="M1057.500 462v182M1135.500 462v182M1212.500 462v182M836 638.500h299M836 649.500h78"/>
            </g>
            <g class="cad-text">
              <text x="837" y="260" text-anchor="middle">1</text><text x="915" y="260" text-anchor="middle">2</text><text x="993" y="260" text-anchor="middle">3</text><text x="1135" y="260" text-anchor="middle">4</text>
              <text x="629" y="468" text-anchor="middle">C</text><text x="629" y="572" text-anchor="middle">B</text><text x="629" y="650" text-anchor="middle">A</text>
              <text x="971" y="338" textLength="34" lengthAdjust="spacingAndGlyphs">6900</text>
              <text x="862" y="403" textLength="33" lengthAdjust="spacingAndGlyphs">1800</text>
              <text x="940" y="403" textLength="33" lengthAdjust="spacingAndGlyphs">1800</text>
              <text x="1049" y="403" textLength="33" lengthAdjust="spacingAndGlyphs">3300</text>
              <text x="1082" y="425" textLength="33" lengthAdjust="spacingAndGlyphs">1800</text>
              <text x="1160" y="425" textLength="33" lengthAdjust="spacingAndGlyphs">1800</text>
              <text transform="translate(712 567) rotate(-90)" textLength="33" lengthAdjust="spacingAndGlyphs">4200</text>
              <text transform="translate(777 529) rotate(-90)" textLength="33" lengthAdjust="spacingAndGlyphs">2400</text>
              <text transform="translate(777 618) rotate(-90)" textLength="33" lengthAdjust="spacingAndGlyphs">1800</text>
              <text transform="translate(793 657) rotate(-90)" textLength="29" lengthAdjust="spacingAndGlyphs">1500</text>
              <text transform="translate(796 657) rotate(-90)" textLength="29" lengthAdjust="spacingAndGlyphs">1200</text>
            </g>
            <path d="M489 621v-44" stroke="#00ff00" stroke-width="5"/><path d="M489 572l-5 11h10z" fill="#00ff00"/>
            <path d="M489 621h40" stroke="#ff0000" stroke-width="4"/><path d="M526 616l12 5-12 5z" fill="#ff0000"/>
            <circle cx="489" cy="621" r="4" fill="#0a6cff"/>
            <path d="M498 576l5 4 5-4M503 580v6" stroke="#00ff00" fill="none"/>
            <path d="M526 602l9 9M535 602l-9 9" stroke="#ff0000"/>
            <path d="M476 616h9l-9 10h9" stroke="#0a6cff" fill="none"/>
          </svg>
          <div class="tip">按鼠标左键指定第一个端点，按右键终止或ESC取消</div>
        </div>
      </div>

      <div class="work-bottom">
        <div class="rowbar b-left">
          <span class="grip tall"></span>
          <span class="combo c-off"><span class="combo-text">不偏移</span><span class="combo-btn"></span></span>
          <span class="sep"></span>
          <span class="lbl">X=</span>
          <span class="num"><span>0</span><i class="spin"></i></span>
          <span class="lbl">mm</span>
          <span class="lbl l-y">Y=</span>
          <span class="num"><span>0</span><i class="spin"></i></span>
          <span class="lbl">mm</span>
          <span class="sep"></span>
          <i class="cb dark"></i>
          <span class="lbl-t">旋转</span>
          <span class="num wide"><span>0.000</span><i class="spin"></i></span>
          <span class="lbl l-deg">°</span>
        </div>
        <div class="rowbar b-right">
          <span class="grip tall"></span>
          <span class="tool"><svg class="i16"><use href="#orth"/></svg>正交</span>
          <span class="tool"><svg class="i16"><use href="#cross"/></svg>交点</span>
          <span class="tool hot h-snap s-a"><svg class="i16"><use href="#perp"/></svg>垂点</span>
          <span class="tool hot h-snap s-b"><svg class="i16"><use href="#mid"/></svg>中点</span>
          <span class="tool t-vert"><svg class="i16"><use href="#vert"/></svg>顶点</span>
          <span class="tool t-coord"><svg class="i16"><use href="#coord"/></svg>坐标</span>
        </div>
      </div>
    </section>
  </main>

  <footer class="status">
    <span class="st s1"><span class="k">X=9661 Y=11574</span></span>
    <span class="st s2">层高<span class="k">:3m</span></span>
    <span class="st s3">建筑底标高<span class="k">:-0.05m</span></span>
    <span class="st s4"><span class="k">0</span></span>
    <span class="st s5">按鼠标左键指定第一个端点，按右键终止或<span class="k">ESC</span>取消</span>
    <span class="st s6"><span class="k">791.9FPS</span></span>
  </footer>

  <footer class="taskbar">
    <span class="start"><svg class="i16" viewBox="0 0 16 16"><path d="M0 2.500l7-1V7.500H0zM8 1.300l8-1.300V7.500H8zM0 8.500h7v6l-7-1zM8 8.500h8V16l-8-1.300z" fill="#fff"/></svg></span>
    <span class="tsearch"><span class="cortana"></span><span class="ts-text">在这里输入你要搜索的内容</span><svg class="i16 ts-mic" viewBox="0 0 16 16"><rect x="5" y="1" width="6" height="10" rx="3" fill="none" stroke="#aaa"/><path d="M3 8c0 6 10 6 10 0M8 13v2M5 15h6" fill="none" stroke="#aaa"/></svg></span>
    <span class="tk"><svg class="i24" viewBox="0 0 24 24"><path d="M12 12C6 12 3 8 6 3c3-2 7 0 6 9zM12 12c0-6 4-9 9-6 2 3 0 7-9 6zM12 12c6 0 9 4 6 9-3 2-7 0-6-9zM12 12c0 6-4 9-9 6-2-3 0-7 9-6z" fill="#e8e8e8"/></svg></span>
    <span class="tk"><svg class="i24" viewBox="0 0 24 24"><path d="M15 5a8 8 0 1 0 5 9c-1 3-8 4-9 0-1-3 3-5 5-3" fill="none" stroke="#ddd" stroke-width="1.500"/><path d="M15 9c0-4 1-8 3-8s3 4 3 8l2 2H13z" fill="#e0a000"/></svg></span>
    <span class="tk"><svg class="i24" viewBox="0 0 24 24"><path d="M3 12C3 5 8 2 13 2c5 0 9 4 9 10v2H8c0 3 2 5 6 5 3 0 5-1 7-2v4c-2 1-5 2-8 2-6 0-10-4-10-11zm5-2h8c0-3-2-4-4-4s-4 1-4 4z" fill="#0078d7"/></svg></span>
    <span class="tk"><svg class="i24" viewBox="0 0 24 24"><path d="M3 7h18v15H3z" fill="#fff"/><path d="M8 7c0-6 8-6 8 0" fill="none" stroke="#fff" stroke-width="1.500"/><path d="M8 11h3.500v3.500H8zM12.500 11H16v3.500h-3.500zM8 15.500h3.500V19H8zM12.500 15.500H16V19h-3.500z" fill="#111"/></svg></span>
    <span class="tk"><svg class="i24" viewBox="0 0 24 24"><path d="M2 4h8l2 2h10v16H2z" fill="#f3cf6e"/><path d="M8 13h8v9H8z" fill="#3aa0e0"/><path d="M10 16h4v6h-4z" fill="#cfe9f8"/></svg></span>
    <span class="tk"><svg class="i24" viewBox="0 0 24 24"><path d="M20 3c-6-3-16 0-16 9 0 7 6 10 10 9 5-1 7-5 6-8l-7 1 2 3c-3 1-6-1-6-5 0-5 6-7 10-5z" fill="#2a9ae8"/></svg></span>
    <span class="tk"><svg class="i24" viewBox="0 0 24 24"><rect x="2" y="3" width="20" height="19" rx="2" fill="#f0a030"/><rect x="5" y="5" width="14" height="15" fill="#fbe8b8"/><path d="M8 9h7M8 12h7M8 15h5" stroke="#a87020"/><path d="M14 13L21 1" stroke="#b05020" stroke-width="2"/></svg></span>
    <span class="tk"><svg class="i24" viewBox="0 0 24 24"><path d="M3 8h10v15H3z" fill="#f2f2f2"/><path d="M5 12h6M5 15h6M5 18h6" stroke="#333"/><text x="12" y="14" class="qm">?</text></svg></span>
    <span class="tk"><svg class="i24" viewBox="0 0 24 24"><circle cx="12" cy="12" r="10" fill="#7ec73a"/><circle cx="12" cy="12" r="7" fill="#fff"/><path d="M7 11h10v2H7z" fill="#7ec73a"/><path d="M3 20c6 4 16 0 18-16" fill="none" stroke="#4a9a1a" stroke-width="1.500"/></svg></span>
    <span class="tk active"><svg class="i24" viewBox="0 0 24 24"><rect width="24" height="24" rx="4" fill="#2bb673"/><path d="M7 4v16M7 12h9M16 8v8" stroke="#fff" stroke-width="2.500"/></svg></span>
    <span class="cpu"><span>26%</span><span>CPU使用</span></span>
    <svg class="tray tr-up" viewBox="0 0 12 8"><path d="M1 7l5-5 5 5" fill="none" stroke="#eee"/></svg>
    <svg class="tray" viewBox="0 0 16 16"><path d="M2 4h12v9H2z" fill="none" stroke="#eee"/><path d="M4 6h7v5H4z" fill="#eee"/><path d="M0 6h2v3H0z" fill="#eee"/></svg>
    <svg class="tray" viewBox="0 0 16 16"><path d="M2 15a2 2 0 0 1 2-2M2 11a5 5 0 0 1 5 4M2 7a9 9 0 0 1 9 8M2 3a13 13 0 0 1 13 12" fill="none" stroke="#ddd"/></svg>
    <svg class="tray" viewBox="0 0 16 16"><path d="M1 6h3l4-3v11l-4-3H1z" fill="none" stroke="#eee"/><path d="M10 6a3 3 0 0 1 0 5M12 4a6 6 0 0 1 0 9" fill="none" stroke="#eee"/></svg>
    <span class="ime">中</span>
    <svg class="tray tr-s" viewBox="0 0 16 16"><rect x="1" y="1" width="14" height="14" rx="3" fill="#f04e1e" transform="rotate(-8 8 8)"/><path d="M11.500 5C9 3.500 5 4 5 6.500S11 8 11 10.500 7 13 4.500 11" fill="none" stroke="#fff" stroke-width="2"/></svg>
    <span class="clock"><span>17:50</span><span>2017/7/3</span></span>
    <svg class="notify" viewBox="0 0 18 18"><path d="M1.500 2h15v12h-5l-2 2.500-2-2.500h-6z" fill="none" stroke="#fff"/></svg>
  </footer>
</div>

<div class="ime-bar">
  <svg class="ime-s" viewBox="0 0 26 26"><path d="M3 1h20l3 2v20l-3 2H3l-2-2V3z" fill="#f04e1e"/><path d="M19 8C14 4 7 6 8 10s10 3 10 7-8 5-12 1" fill="none" stroke="#fff" stroke-width="4"/></svg>
  <span class="ime-rest">
    <span class="ime-zh">中</span>
    <span class="ime-zh dots">°,</span>
    <svg class="i16"><use href="#pgMic"/></svg>
    <svg class="i16" viewBox="0 0 16 16"><rect x="0" y="2" width="16" height="12" rx="2" fill="#1f78d1"/><path d="M2 5h12M2 8h12" stroke="#fff" stroke-dasharray="1 1"/><path d="M4 11h8" stroke="#fff"/></svg>
    <svg class="i16" viewBox="0 0 16 16"><circle cx="7" cy="4" r="3" fill="#b8bfc8"/><path d="M2 14c0-5 2-6 5-6 1 0 2 0 3 1v5z" fill="#b8bfc8"/><rect x="9" y="9" width="7" height="6" fill="#eee"/></svg>
    <svg class="i16" viewBox="0 0 16 16"><path d="M4 1l4 1 4-1 4 3-2 3-1-1v9H3V6L2 7 0 4z" fill="#1f78d1"/></svg>
    <svg class="i16" viewBox="0 0 16 16"><path d="M1 15l7-8c-1-3 1-6 5-6l-2 3 1 2 2 1 2-3c0 4-3 6-6 5l-7 7z" fill="#1f78d1"/></svg>
  </span>
</div>

<div class="badge"><span>75</span></div>

<svg class="annot" viewBox="0 0 1366 768" width="1366" height="768" aria-hidden="true">
  <ellipse cx="306" cy="523.500" rx="97" ry="11" fill="none" stroke="#ee0000" stroke-width="3"/>
  <ellipse cx="289" cy="712" rx="86" ry="19" fill="none" stroke="#ee0000" stroke-width="3"/>
</svg>
</body>
</html>
```
FILE: styles.css
```css
* { box-sizing: border-box; }
html, body { margin: 0; padding: 0; }
body { width: 1366px; height: 768px; overflow: hidden; position: relative; background: #f0f0f0;
  font: 12px/1.2 "Noto Sans CJK SC", "Noto Sans", sans-serif; color: #000; }
.defs { position: absolute; width: 0; height: 0; }
.app { display: flex; flex-direction: column; width: 1366px; height: 768px; }
ul { list-style: none; margin: 0; padding: 0; }
svg { display: block; flex: none; overflow: visible; }
.i14 { width: 15px; height: 15px; }
.i16 { width: 16px; height: 16px; }
.i18 { width: 18px; height: 18px; }
.i24 { width: 24px; height: 24px; }
.k { font: 11px/1 "Liberation Mono", monospace; letter-spacing: -0.6px; }

/* title */
.titlebar { height: 25px; background: #fff; display: flex; align-items: center; padding-left: 2px; }
.logo { width: 15px; height: 15px; margin-right: 6px; }
.title-text { font-size: 12.600px; white-space: nowrap; }
.winctl { margin-left: auto; display: flex; gap: 33px; padding-right: 20px; align-items: center; }
.wc { width: 12px; height: 12px; }

/* menu */
.menubar { height: 27px; background: #fff; display: flex; align-items: center; position: relative; }
.menu-left { width: 892px; height: 27px; display: flex; align-items: center; padding-left: 3px; border-right: 1px solid #d8d8d8; border-bottom: 1px solid #d8d8d8; white-space: nowrap; }
.mi { margin-right: 10.500px; }
.mi.first { margin-left: 7px; }
.robot { width: 16px; height: 16px; margin-left: -2px; margin-right: 4px; }
.notice { color: #006464; margin-left: 57px; width: 160px; white-space: nowrap; }
.menu-right { margin-left: auto; width: 257px; height: 27px; display: flex; align-items: center; border-bottom: 1px solid #d8d8d8; white-space: nowrap; }
.menu-right .grip { margin-right: 9px; height: 24px; }
.account { font-size: 12px; width: 78px; }
.menu-right .caret { margin-left: 2px; }
.beans { margin-left: 5px; width: 48px; }
.bell { margin-left: 1px; }
.chat { margin: 0 4px 0 11px; }

.grip { width: 3px; height: 22px; flex: none; background-image: radial-gradient(circle, #b8b8b8 1px, transparent 1.100px); background-size: 3px 4px; }
.tall { height: 24px; }
.caret { width: 0; height: 0; border-left: 4px solid transparent; border-right: 4px solid transparent; border-top: 4px solid #222; flex: none; margin-left: 6px; }
.c-s { border-left-width: 3.500px; border-right-width: 3.500px; margin-left: 0; }
.ca { margin-left: 4px; }
.dim { border-top-color: #999; }

/* tool bar */
.toolbar { height: 30px; background: #fff; border-bottom: 2px solid #d8d8d8; display: flex; align-items: center; padding-left: 3px; white-space: nowrap; }
.tool { display: inline-flex; align-items: center; gap: 4px; margin-left: 7px; white-space: nowrap; height: 24px; flex: none; }
.rg { margin-left: 5px; gap: 3px; }
.off { color: #a8a8a8; }
.sep { width: 1px; height: 22px; background: #a0a0a0; margin-left: 5px; flex: none; }
.sep-r { margin-left: 7px; }
.sep-t { margin-left: 3px; }
.t-new { margin-left: 7px; }
.t-open { margin-left: 5px; }
.t-save { margin-left: 5px; }
.t-sep1 { margin: 0 8px 0 6px; }
.t-redo { margin-left: 5px; }
.t-sep2 { margin-left: 1px; background: #ddd; }
.t-grip2 { margin-left: 13px; }
.t-def { margin-left: 5px; }
.sigma { font-family: "Liberation Serif", serif; font-size: 15px; width: 10px; margin-right: 5px; }
.t-cloud { margin-left: 6px; }
.t-sum { margin-left: 8px; }
.sep-grip { background: #ddd; margin-left: 4px; margin-right: 0; }
.combo { display: flex; align-items: stretch; height: 21px; flex: none; }
.combo-text { background: #fff; flex: 1; padding-left: 2px; line-height: 21px; }
.combo-text.lat { font-size: 12.500px; }
.combo-btn { width: 13px; flex: none; background: #dcdcdc; border: 1px solid #a6a6a6; position: relative; }
.combo-btn::after { content: ""; position: absolute; left: 2.500px; top: 6px; width: 5px; height: 5px; border-right: 1px solid #555; border-bottom: 1px solid #555; transform: rotate(45deg); }
.c-floor { width: 79px; margin-left: 6px; }
.t-view { margin-left: 4px; }
.t-zoom { margin-left: 9px; }
.hot { background: #cfe6f9; border: 1px solid #98c7ea; padding: 0 2px; }
.t-rot { margin-left: 2px; width: 82px; padding-right: 0; background: #e0effa; border-color: #c6e0f4; }
.split-caret { border-left: 1px solid #c6e0f4; height: 100%; width: 11px; display: flex; align-items: center; justify-content: center; margin-left: auto; }

/* main */
.main { height: 623px; display: flex; background: #f0f0f0; overflow: hidden; }
.nav { width: 201px; flex: none; display: flex; flex-direction: column; padding-top: 2px; }
.pane-title { height: 15px; display: flex; align-items: center; font-size: 13px; line-height: 15px; background: #f0f0f0; position: relative; border: 1px solid #bbb; border-left: 0; border-right: 0; flex: none; }
.pane-title.blue { background: #0a5be0; color: #fff; border: 0; }
.pin { margin-left: auto; width: 9px; height: 10px; margin-right: 4px; color: #111; }
.blue .pin { color: #fff; }
.x { width: 20px; text-align: center; font-size: 14px; color: #555; }
.blue .x { color: #dde; }
.section { height: 23px; flex: none; font: inherit; font-size: 12px; background: #f0f0f0; border: 1px solid #a8a8a8; padding: 0; margin: 0 2px 0 0; line-height: 20px; }
.tree-tools { height: 26px; background: #fff; display: flex; gap: 8px; align-items: center; padding: 1px 0 0 8px; flex: none; margin-right: 2px; border-left: 1px solid #a8a8a8; border-right: 1px solid #a8a8a8; }
.tree { height: 487px; display: flex; background: #fff; border: 1px solid #7c7c7c; margin: 0 3px 0 2px; overflow: hidden; flex: none; }
.tree-list { flex: 1; padding-top: 2px; }
.tn, .tc { height: 16px; line-height: 16px; display: flex; align-items: center; position: relative; white-space: nowrap; }
.tn { padding-left: 25px; }
.tn svg { margin-right: 4px; }
.tc { padding-left: 44px; }
.tc svg { margin-right: 3px; }
.tn::before { content: ""; position: absolute; left: 10px; top: 4px; width: 6px; height: 6px; border-right: 1.500px solid #555; border-bottom: 1.500px solid #555; }
.tn.open::before { transform: rotate(45deg); }
.tn.shut::before { transform: rotate(-45deg); border-color: #aaa; left: 8px; top: 5px; }
.tn::after { content: ""; position: absolute; left: 20px; top: 8px; width: 5px; border-top: 1px dotted #777; }
.tc::before { content: ""; position: absolute; left: 33px; top: 0; height: 16px; border-left: 1px dotted #777; }
.tc::after { content: ""; position: absolute; left: 33px; top: 8px; width: 10px; border-top: 1px dotted #777; }
.tc.sel > span { background: #e0e0e0; padding: 0 1px; }
.tc.sel svg { margin-right: 0; }
.vscroll { width: 16px; background: #f0f0f0; display: flex; flex-direction: column; flex: none; }
.tree-scroll { margin-right: 1px; }
.sb-arrow { height: 17px; flex: none; position: relative; background: #f0f0f0; }
.sb-arrow::after { content: ""; position: absolute; width: 5px; height: 5px; border-left: 1.500px solid #555; border-top: 1.500px solid #555; left: 5px; top: 7px; }
.sb-arrow.up::after { transform: rotate(45deg); }
.sb-arrow.down::after { transform: rotate(225deg); top: 4px; }
.sb-arrow.left::after { transform: rotate(-45deg); }
.sb-arrow.right::after { transform: rotate(135deg); left: 3px; }
.sb-thumb { background: #cdcdcd; display: block; }
.tree-scroll .sb-thumb { height: 320px; margin-top: 110px; margin-bottom: auto; }
.sec-bottom { margin-top: 2px; }

/* parts */
.parts { width: 201px; flex: none; margin-left: 2px; padding-top: 2px; display: flex; flex-direction: column; }
.parts-tools { height: 26px; background: #f0f0f0; display: flex; align-items: center; flex: none; }
.p-new { margin-left: 6px; }
.p-del { margin-left: 9px; }
.p-copy { margin-left: 7px; }
.p-filter { margin-left: 9px; }
.search { height: 27px; display: flex; align-items: center; flex: none; padding-left: 2px; gap: 5px; }
.search-box { width: 175px; height: 25px; background: #fff; border: 1px solid #777; color: #888; padding-left: 3px; line-height: 23px; font-size: 12.500px; }
.search-ic { margin-left: 2px; }
.part-grid { height: 228px; flex: none; margin: 1px 0 0 2px; background: #fff; border: 1px solid #a8a8a8; padding: 1px; }
.pg-head, .pg-row { display: flex; height: 19px; }
.pg-head { height: 20px; margin-bottom: 1px; }
.pg-corner { width: 26px; background: #f0f0f0; }
.pg-name { flex: 1; background: linear-gradient(#fde6a8, #f5bf6b); color: #800080; text-align: center; line-height: 19px; font-size: 12px; }
.pg-row { border-bottom: 1px solid #bbb; font: 11px/20px "Liberation Mono", monospace; letter-spacing: -0.6px; overflow: hidden; }
.pg-no { width: 26px; background: #f0f0f0; padding-left: 7px; border-right: 1px solid #bbb; }
.pg-val { padding-left: 20px; flex: 1; }
.pg-row.sel .pg-no { background: #fdd28a; color: #800080; }
.pg-row.sel .pg-val { background: #d6e8f7; }
.prop-title { margin-top: 7px; }
.prop-wrap { height: 314px; flex: none; margin: 1px 0 0 2px; background: #fff; border: 1px solid #a8a8a8; padding: 3px 0 0 1px; display: flex; flex-direction: column; }
.prop-body { display: flex; height: 278px; flex: none; }
.prop { border-collapse: collapse; table-layout: fixed; width: 178px; height: 268px; }
.prop td, .prop th { padding: 0; font-weight: 400; border-bottom: 1px solid #b8b8b8; border-right: 1px solid #b8b8b8; height: 21px; white-space: nowrap; overflow: hidden; }
.prop .last td { height: 17px; }
.prop th:first-child, .prop td:first-child { width: 84px; }
.prop th:nth-child(2), .prop td:nth-child(2) { width: 64px; }
.prop th { text-align: left; padding-left: 2px; font-size: 12px; background: #f0f0f0; }
.prop .hot-col { background: linear-gradient(#fde6a8, #f5bf6b); color: #800080; }
.n { padding-left: 20px !important; position: relative; }
.b { color: #0000e6; }
.g { color: #9a9a9a; }
.v { padding-left: 2px !important; }
.v.sel { background: #d6e8f7; }
.cb { display: block; width: 13px; height: 13px; background: #fff; border: 1px solid #333; margin-left: 1px; }
.plus { position: absolute; left: 3px; top: 4px; width: 11px; height: 11px; border: 1px solid #aaa; font: 400 11px/9px "Liberation Sans", sans-serif; text-align: center; background: #fff; }
.prop-scroll { margin-left: auto; height: 272px; margin-top: -2px; }
.prop-scroll .sb-thumb { height: 180px; margin-bottom: auto; }
.hscroll { height: 16px; margin-top: 2px; display: flex; background: #f0f0f0; }
.hscroll .sb-arrow { width: 16px; height: 16px; }
.hscroll .sb-thumb { width: 45px; margin-right: auto; }

/* work */
.work { flex: 1; display: flex; flex-direction: column; margin-left: 1px; min-width: 0; }
.work-top { height: 59px; display: flex; flex: none; }
.work-rows { width: 495px; flex: none; }
.rowbar { display: flex; align-items: center; background: #f0f0f0; border-bottom: 1px solid #d0d0d0; white-space: nowrap; }
.r1 { height: 29px; padding-left: 3px; border-top: 1px solid #d8d8d8; }
.r2 { height: 30px; width: 432px; padding-left: 3px; border-right: 1px solid #d0d0d0; }
.c-1, .c-2 { height: 23px; }
.c-1 .combo-text, .c-2 .combo-text { line-height: 23px; }
.c-1 { width: 56px; margin-left: 6px; }
.c-2 { width: 69px; margin-left: 3px; }
.r1 .sep { margin-left: 3px; }
.h-prop { margin-left: 3px; width: 52px; height: 23px; }
.h-list { margin-left: 0; width: 74px; height: 23px; }
.t-pick { margin-left: 4px; }
.measure { width: 341px; height: 29px; margin-left: 75px; margin-top: 1px; padding-left: 2px; border-right: 1px solid #d0d0d0; }
.measure .tool { margin-left: 7px; }
.t-sel { margin-left: 6px; }
.t-pt { margin-left: 5px; gap: 4px; }
.h-line { height: 23px; width: 51px; margin-left: 5px; }
.t-arc { margin-left: 3px; gap: 2px; }
.t-arc .caret { margin-left: 2px; }
.c-blank { width: 58px; margin-left: 3px; }
.t-rect { margin-left: 2px; gap: 3px; }

.work-mid { height: 534px; flex: none; display: flex; }
.vbar { width: 29px; flex: none; padding: 2px 3px 0 0; display: flex; flex-direction: column; align-items: center; background: #f0f0f0; }
.vbar > svg { margin-top: 6px; }
.vbar > .v-first { margin-top: 4px; }
.vgrip { height: 3px; width: 24px; background-image: radial-gradient(circle, #b8b8b8 1px, transparent 1.100px); background-size: 4px 3px; flex: none; }
.hsep { width: 20px; height: 1px; background: #a0a0a0; flex: none; margin-top: 6px; }
.vt { display: flex; flex-direction: column; align-items: center; margin-top: 9px; }
.vtxt { writing-mode: vertical-rl; font-size: 12px; line-height: 14px; width: 14px; margin-top: 1px; }
.tiny { width: 0; height: 0; border-top: 2px solid transparent; border-bottom: 2px solid transparent; border-right: 3px solid #888; margin: 2px 0 2px; }
.vbar > .chev { width: 8px; height: 8px; margin-top: 11px; margin-left: 9px; }
.canvas { width: 932px; height: 534px; background: #000; position: relative; flex: none; overflow: hidden; }
.cad { display: block; }
.cad-text text { font: 14px "Liberation Sans", sans-serif; fill: #d8d8d8; }
.tip { position: absolute; left: 741px; top: 14px; width: 191px; height: 31px; background: #1a1a5c; border: 1px solid #6a6a6a; color: #8c8c8c; font-size: 12px; line-height: 13px; padding: 2px 3px 0 4px; }

.work-bottom { height: 30px; flex: none; display: flex; padding-top: 1px; }
.b-left { width: 413px; height: 28px; padding-left: 3px; border-right: 1px solid #d0d0d0; }
.c-off { width: 56px; margin-left: 6px; height: 23px; }
.b-left .sep { margin-left: 4px; }
.lbl { margin-left: 4px; color: #666; flex: none; }
.l-y { margin-left: 6px; }
.l-deg { margin-left: 9px; }
.lbl-t { margin-left: 8px; }
.num { display: flex; justify-content: flex-end; align-items: center; width: 55px; height: 24px; margin-left: 4px; background: #ececec; color: #666; padding-right: 15px; position: relative; flex: none; }
.num.wide { width: 62px; }
.spin { position: absolute; right: 0; top: 0; width: 13px; height: 24px; background: #e4e4e4; border: 1px solid #c8c8c8; }
.cb.dark { margin-left: 4px; }
.b-right { margin-left: 66px; width: 482px; height: 28px; padding-left: 3px; }
.b-right .tool { gap: 2px; }
.h-snap { height: 23px; }
.b-right .s-a { margin-left: 3px; width: 51px; }
.b-right .s-b { margin-left: 1px; width: 49px; }
.b-right .t-vert { margin-left: 5px; }
.b-right .t-coord { margin-left: 8px; }

/* status */
.status { height: 23px; display: flex; background: #f0f0f0; align-items: stretch; flex: none; }
.st { border-left: 1px solid #c8c8c8; line-height: 23px; padding-left: 2px; white-space: nowrap; font-size: 12px; }
.s1 { width: 150px; border-left: 0; padding-left: 0; }
.s2 { width: 80px; }
.s3 { width: 129px; }
.s4 { width: 50px; }
.s5 { width: 736px; padding-left: 251px; }
.s6 { flex: 1; }

/* task */
.taskbar { height: 40px; flex: none; background: #02090f; display: flex; align-items: center; color: #f0f0f0; }
.start { width: 48px; height: 40px; background: #000; display: flex; align-items: center; justify-content: center; }
.tsearch { width: 345px; height: 40px; background: #333; display: flex; align-items: center; color: #aaa; }
.cortana { width: 18px; height: 18px; border-radius: 50%; border: 2.500px solid #eee; margin-left: 9px; flex: none; }
.ts-text { margin-left: 7px; font-size: 12.500px; flex: 1; color: #a8a8a8; }
.ts-mic { margin-right: 13px; }
.tk { width: 49.500px; height: 40px; display: flex; align-items: center; justify-content: center; flex: none; }
.tk:nth-of-type(n+8) { box-shadow: inset 0 -2px 0 #76b9ed; }
.tk.active { background: #33393d; }
.qm { font: 700 14px "Liberation Sans", sans-serif; fill: #f6e32a; }
.cpu { width: 70px; margin-left: 124px; display: flex; flex-direction: column; align-items: center; font-size: 12.500px; line-height: 18px; flex: none; }
.tray { width: 16px; height: 16px; margin-left: 8.500px; }
.tr-up { width: 12px; height: 8px; margin-left: 11px; }
.ime { margin-left: 8px; font-size: 13px; font-weight: 700; }
.tr-s { margin-left: 14px; }
.clock { margin-left: 3px; width: 88px; display: flex; flex-direction: column; align-items: center; font-size: 13px; line-height: 18px; }
.notify { width: 18px; height: 18px; margin-left: 2px; }

/* overlays */
.ime-bar { position: absolute; left: 866px; top: 1px; height: 27px; display: flex; align-items: center; }
.ime-s { width: 27px; height: 26px; }
.ime-rest { display: flex; align-items: center; gap: 6px; width: 158px; height: 24px; background: #f6fafd; border: 1px solid #c6d8e8; padding-left: 6px; color: #1f78d1; }
.ime-zh { font-size: 14px; font-weight: 700; width: 16px; }
.dots { width: 14px; }
.badge { position: absolute; left: 1183px; top: -29px; width: 48px; height: 48px; border-radius: 50%; background: #3cb54a; border: 2px solid #c8c8c8; box-shadow: 0 1px 2px #999; color: #fff; font: 700 12px/1 "Liberation Sans", sans-serif; display: flex; align-items: flex-end; justify-content: center; padding-bottom: 3px; }
.annot { position: absolute; left: 0; top: 0; pointer-events: none; }
```
